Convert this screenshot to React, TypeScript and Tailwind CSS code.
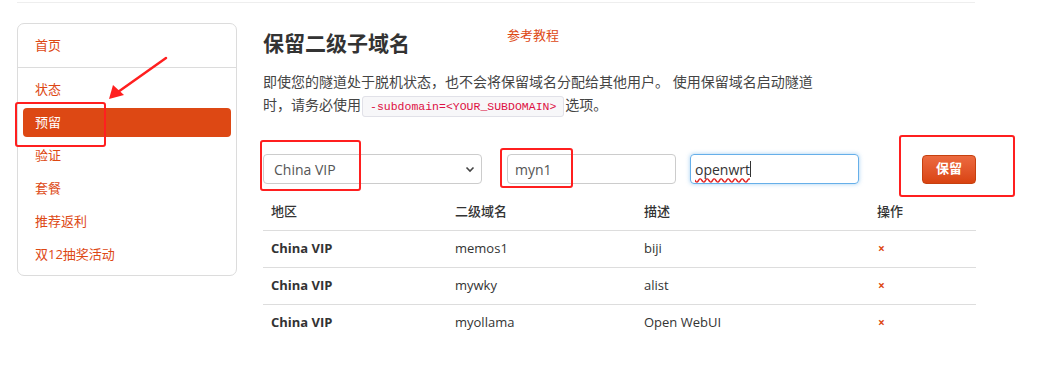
import React from 'react';

const navItems = ['状态', '预留', '验证', '套餐', '推荐返利', '双12抽奖活动'];

const rows = [
  { region: 'China VIP', sub: 'memos1', desc: 'biji' },
  { region: 'China VIP', sub: 'mywky', desc: 'alist' },
  { region: 'China VIP', sub: 'myollama', desc: 'Open WebUI' },
];

function Sidebar() {
  return (
    <div className="w-[220px] mt-[20px] h-[253px] border border-[#dcdcdc] rounded-[7px] pt-[7px] px-[5px] shrink-0">
      <a className="flex items-center h-[29px] pl-[12px] text-[13px] text-[#dd4814]">首页</a>
      <div className="-mx-[5px] mt-[7px] mb-[7px] border-t border-[#dcdcdc]" />
      <div className="flex flex-col gap-[4px]">
        {navItems.map((item) => (
          <a
            key={item}
            className={
              item === '预留'
                ? 'flex items-center h-[29px] pl-[12px] text-[13px] rounded-[4px] bg-[#dd4814] text-white'
                : 'flex items-center h-[29px] pl-[12px] text-[13px] text-[#dd4814]'
            }
          >
            {item}
          </a>
        ))}
      </div>
    </div>
  );
}

function Annotations() {
  return (
    <>
      <div className="absolute left-[15px] top-[102px] w-[91px] h-[45px] border-2 border-[#ff1f1f] rounded-[3px] pointer-events-none" />
      <div className="absolute left-[260px] top-[140px] w-[101px] h-[51px] border-2 border-[#ff1f1f] rounded-[3px] pointer-events-none" />
      <div className="absolute left-[500px] top-[148px] w-[73px] h-[40px] border-2 border-[#ff1f1f] rounded-[3px] pointer-events-none" />
      <div className="absolute left-[899px] top-[135px] w-[116px] h-[62px] border-2 border-[#ff1f1f] rounded-[3px] pointer-events-none" />
      <svg className="absolute left-0 top-0 pointer-events-none" width="200" height="120">
        <line x1="166" y1="58" x2="118" y2="92" stroke="#ff1f1f" strokeWidth="2.5" strokeLinecap="round" />
        <polygon points="109,99 113,85 124,95" fill="#ff1f1f" />
      </svg>
    </>
  );
}

export default function App() {
  return (
    <div
      className="relative w-[1053px] h-[371px] bg-white text-[#333] overflow-hidden"
      style={{ fontFamily: '"Open Sans", "Noto Sans CJK SC", sans-serif' }}
    >
      <div className="ml-[17px] w-[958px] h-[3px] border-b border-[#eeeeee]" />

      <div className="flex pl-[17px] gap-[26px]">
        <Sidebar />

        <div className="w-[713px]">
          {/* Heading */}
          <div className="flex items-start mt-[22px] h-[36px]">
            <h1 className="text-[21px] font-bold leading-[36px] text-[#333]">保留二级子域名</h1>
            <a className="ml-[97px] text-[13px] leading-[20px] text-[#dd4814]">参考教程</a>
          </div>

          <p className="mt-[9px] text-[14px] leading-[23px] text-[#444]">
            即使您的隧道处于脱机状态，也不会将保留域名分配给其他用户。 使用保留域名启动隧道
            <br />
            时，请务必使用
            <code
              className="mx-[1px] px-[7px] py-[3px] text-[11.5px] leading-[12px] text-[#dd1144] bg-[#f7f7f9] border border-[#e1e1e8] rounded-[3px]"
              style={{ fontFamily: '"Liberation Mono", monospace' }}
            >
              -subdomain=&lt;YOUR_SUBDOMAIN&gt;
            </code>
            选项。
          </p>

          {/* Form */}
          <div className="flex items-center mt-[38px] h-[30px]">
            <div className="relative w-[219px] h-[30px] border border-[#cccccc] rounded-[4px] flex items-center pl-[10px] text-[14px] text-[#555]">
              China VIP
              <svg className="absolute right-[6px] top-[11px]" width="10" height="7" viewBox="0 0 10 7">
                <path d="M1.5 1.5 L5 5 L8.5 1.5" fill="none" stroke="#444" strokeWidth="1.6" />
              </svg>
            </div>
            <div className="ml-[25px] w-[169px] h-[30px] border border-[#cccccc] rounded-[4px] flex items-center pl-[7px] text-[14px] text-[#555]">
              myn1
            </div>
            <div className="ml-[14px] w-[169px] h-[30px] border border-[#66afe9] rounded-[4px] shadow-[0_0_4px_rgba(102,175,233,0.6)] flex items-center pl-[4px] text-[14px] text-[#333]">
              <span className="underline decoration-wavy decoration-[#e02020] underline-offset-[3px]">openwrt</span>
              <span className="inline-block w-[1px] h-[16px] bg-[#333]" />
            </div>
            <button className="ml-[63px] w-[54px] h-[29px] rounded-[4px] bg-gradient-to-b from-[#ec6a3f] to-[#d9430f] border border-[#c6400f] text-white text-[13px] font-bold">
              保留
            </button>
          </div>

          {/* Table */}
          <table className="mt-[9px] w-[713px] text-[13px] text-[#333] border-collapse">
            <thead>
              <tr className="h-[37px] border-b border-[#dddddd]">
                <th className="w-[184px] text-left font-medium px-[8px]">地区</th>
                <th className="w-[189px] text-left font-medium px-[8px]">二级域名</th>
                <th className="w-[233px] text-left font-medium px-[8px]">描述</th>
                <th className="text-left font-medium px-[8px]">操作</th>
              </tr>
            </thead>
            <tbody>
              {rows.map((r, i) => (
                <tr key={r.sub} className={i < rows.length - 1 ? 'h-[37px] border-b border-[#dddddd]' : 'h-[37px]'}>
                  <td className="px-[8px] font-bold">{r.region}</td>
                  <td className="px-[8px]">{r.sub}</td>
                  <td className="px-[8px]">{r.desc}</td>
                  <td className="px-[8px] pl-[9px] text-[12px] font-bold text-[#dd4814]">×</td>
                </tr>
              ))}
            </tbody>
          </table>
        </div>
      </div>

      <Annotations />
    </div>
  );
}
